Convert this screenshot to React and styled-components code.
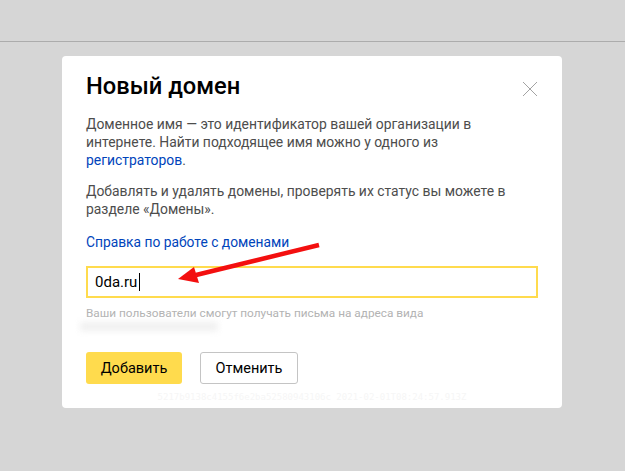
import React from "react";
import styled, { createGlobalStyle } from "styled-components";

const GlobalStyle = createGlobalStyle`
  html, body {
    margin: 0;
    padding: 0;
    background: #d6d6d6;
    overflow: hidden;
  }
  body {
    font-family: Roboto, "Liberation Sans", sans-serif;
  }
`;

const App = () => {
  return (
    <>
      <GlobalStyle />
      <Page>
        <TopBar />
        <Modal>
          <HeaderRow>
            <Title>Новый домен</Title>
            <CloseButton aria-label="Закрыть">
              <svg width="16" height="16" viewBox="0 0 16 16">
                <path d="M1 1L15 15M15 1L1 15" stroke="#a3a3a3" strokeWidth="1" fill="none" />
              </svg>
            </CloseButton>
          </HeaderRow>
          <Paragraph>
            Доменное имя — это идентификатор вашей организации в интернете. Найти подходящее имя
            можно у одного из <Link>регистраторов</Link>.
          </Paragraph>
          <Paragraph>
            Добавлять и удалять домены, проверять их статус вы можете в разделе «Домены».
          </Paragraph>
          <HelpLink>Справка по работе с доменами</HelpLink>
          <Field>
            <FieldValue>0da.ru</FieldValue>
            <Caret />
            <Arrow width="150" height="50" viewBox="0 0 150 50">
              <path d="M21 34L144 4" stroke="#f30f0f" strokeWidth="4.5" fill="none" />
              <path d="M3 38L19 26L24 42Z" fill="#f30f0f" />
            </Arrow>
          </Field>
          <Hint>Ваши пользователи смогут получать письма на адреса вида</Hint>
          <Smudge />
          <Buttons>
            <AddButton>Добавить</AddButton>
            <CancelButton>Отменить</CancelButton>
          </Buttons>
          <TraceId>5217b9138c4155f6e2ba52580943106c 2021-02-01T08:24:57.913Z</TraceId>
        </Modal>
      </Page>
    </>
  );
};

export default App;

const Page = styled.div`
  width: 625px;
  height: 471px;
  display: flex;
  flex-direction: column;
  align-items: flex-start;
`;

const TopBar = styled.div`
  width: 100%;
  height: 41px;
  flex: none;
  border-bottom: 1px solid #acacac;
`;

const Modal = styled.div`
  position: relative;
  box-sizing: border-box;
  width: 500px;
  height: 352px;
  margin: 14px 0 0 62px;
  padding: 15px 24px 0;
  background: #fff;
  border-radius: 4px;
`;

const HeaderRow = styled.div`
  display: flex;
  justify-content: space-between;
  align-items: flex-start;
  height: 30px;
  margin-bottom: 14px;
`;

const Title = styled.h1`
  margin: 0;
  font-size: 23.7px;
  line-height: 30px;
  font-weight: 500;
  color: #000;
`;

const CloseButton = styled.div`
  width: 16px;
  height: 16px;
  margin: 10px 0 0;
`;

const Paragraph = styled.p`
  margin: 0 0 13px;
  font-size: 13.9px;
  line-height: 18px;
  color: #4d4d4d;
`;

const Link = styled.span`
  color: #04b;
`;

const HelpLink = styled.div`
  margin-top: 15px;
  font-size: 13.8px;
  line-height: 18px;
  color: #04b;
`;

const Field = styled.div`
  position: relative;
  box-sizing: border-box;
  display: flex;
  align-items: center;
  width: 452px;
  height: 32px;
  margin-top: 15px;
  padding: 0 7px;
  border: 2px solid #ffdb4d;
`;

const FieldValue = styled.span`
  font-size: 15px;
  color: #000;
`;

const Caret = styled.span`
  width: 1px;
  height: 18px;
  margin-left: 2px;
  background: #000;
`;

const Arrow = styled.svg`
  position: absolute;
  left: 87px;
  top: -27px;
`;

const Hint = styled.div`
  margin-top: 7px;
  font-size: 11.8px;
  line-height: 16px;
  color: #b3b3b3;
`;

const Smudge = styled.div`
  position: absolute;
  left: 18px;
  top: 266px;
  width: 138px;
  height: 9px;
  background: #f0f0f0;
  filter: blur(3px);
`;

const Buttons = styled.div`
  display: flex;
  gap: 18px;
  margin-top: 31px;
`;

const AddButton = styled.button`
  width: 96px;
  height: 32px;
  padding: 0;
  border: none;
  border-radius: 3px;
  background: #ffdb4d;
  color: #000;
  font: 14.5px Roboto, sans-serif;
`;

const CancelButton = styled.button`
  width: 98px;
  height: 32px;
  padding: 0;
  border: 1px solid #c4c4c4;
  border-radius: 3px;
  background: #fff;
  color: #000;
  font: 14.5px Roboto, sans-serif;
`;

const TraceId = styled.div`
  position: absolute;
  left: 0;
  right: 0;
  bottom: 5px;
  text-align: center;
  font-family: "DejaVu Sans Mono", monospace;
  font-size: 9px;
  line-height: 12px;
  color: #f6f6f6;
  white-space: nowrap;
`;
